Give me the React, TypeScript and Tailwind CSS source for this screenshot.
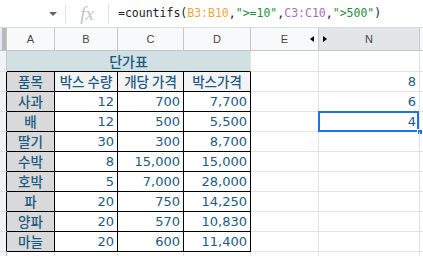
import React from "react";

// column widths of the visible sheet, including each cell's right border
const colW = ["w-[48px]", "w-[63px]", "w-[66px]", "w-[67px]", "w-[68px]", "w-[101px]", "w-[10px]"];
const colNames = ["A", "B", "C", "D", "E", "N", ""];

const items: [string, string, string, string][] = [
    ["사과", "12", "700", "7,700"],
    ["배", "12", "500", "5,500"],
    ["딸기", "30", "300", "8,700"],
    ["수박", "8", "15,000", "15,000"],
    ["호박", "5", "7,000", "28,000"],
    ["파", "20", "750", "14,250"],
    ["양파", "20", "570", "10,830"],
    ["마늘", "20", "600", "11,400"],
];

// values shown in column N, by table row index (0 = header row)
const nValues: { [k: number]: string } = { 0: "8", 1: "6", 2: "4" };

const cellFont = "font-['DejaVu_Sans','Noto_Sans_CJK_KR',sans-serif] text-[13px] leading-none text-[#1d5a82]";
const korFont = "font-['Noto_Sans_CJK_KR',sans-serif] font-medium text-[13.5px] leading-none text-[#1d5a82]";

const Strip = ({ black }: { black?: boolean }) => (
    <div
        className={`w-[7px] shrink-0 bg-[#f1f3f4] border-b border-b-[#e2e2e3] border-r ${
            black ? "border-r-black" : "border-r-[#c4c7c5]"
        }`}
    />
);

const FormulaBar = () => (
    <div className="flex h-[28px] items-center border-b border-[#dadce0] bg-white">
        <div className="w-[65px] flex justify-end pr-[8px]">
            <span className="block w-0 h-0 border-l-[4px] border-r-[4px] border-t-[4px] border-l-transparent border-r-transparent border-t-[#5f6368]" />
        </div>
        <div className="w-px h-[18px] bg-[#e0e0e0]" />
        <div className="w-[42px] flex justify-center font-['Liberation_Serif',serif] italic text-[19px] text-[#c4c4c4] leading-none">
            fx
        </div>
        <div className="w-px h-[18px] bg-[#e0e0e0]" />
        <div className="pl-[9px] font-['DejaVu_Sans_Mono',monospace] text-[11.5px] text-[#202124] whitespace-pre">
            =countifs(<span className="text-[#f4a43a]">B3:B10</span>,
            <span className="text-[#1e8e3e]">"&gt;=10"</span>,<span className="text-[#a56cc2]">C3:C10</span>,
            <span className="text-[#1e8e3e]">"&gt;500"</span>)
        </div>
    </div>
);

const ColumnHeader = () => (
    <div className="flex h-[23px] border-b border-[#c4c7c5] bg-[#f8f9fa]">
        <div className="w-[7px] shrink-0 flex border-r border-[#c4c7c5] bg-[#e8eaed]">
            <div className="w-[2px]" />
            <div className="w-[4px] bg-[#b7b9bc]" />
        </div>
        {colNames.map((name, i) => (
            <div
                key={i}
                className={`${colW[i]} shrink-0 relative flex items-center justify-center border-r border-[#c4c7c5] font-['Liberation_Sans',sans-serif] text-[11px] text-[#444746] ${
                    name === "N" ? "bg-[#e3e5e8]" : ""
                }`}
            >
                {name}
                {name === "E" && (
                    <span className="absolute right-[4px] top-[8px] w-0 h-0 border-t-[3px] border-b-[3px] border-r-[4px] border-t-transparent border-b-transparent border-r-black" />
                )}
                {name === "N" && (
                    <span className="absolute left-[4px] top-[8px] w-0 h-0 border-t-[3px] border-b-[3px] border-l-[4px] border-t-transparent border-b-transparent border-l-black" />
                )}
            </div>
        ))}
    </div>
);

const grid = "border-r border-b border-[#e2e2e3]";
const tbl = "border-r border-b border-black";

const TitleRow = () => (
    <div className="flex h-[21px]">
        <Strip />
        <div
            className={`w-[244px] shrink-0 flex items-center justify-center bg-[#d0e0e3] border-r border-r-[#e2e2e3] border-b border-b-black ${korFont} text-[14px]`}
        >
            단가표
        </div>
        <div className={`${colW[4]} shrink-0 ${grid}`} />
        <div className={`${colW[5]} shrink-0 ${grid}`} />
        <div className={`${colW[6]} shrink-0 ${grid}`} />
    </div>
);

const NCell = ({ index }: { index: number }) => {
    const selected = index === 2;
    return (
        <div className={`${colW[5]} shrink-0 relative flex items-center justify-end pr-[3px] ${grid} ${cellFont}`}>
            {nValues[index] ?? ""}
            {selected && (
                <>
                    <div className="absolute left-[-1px] top-[-1px] right-[0px] bottom-[-1px] border-2 border-[#1a73e8]" />
                    <div className="absolute right-[-4px] bottom-[-4px] w-[6px] h-[6px] bg-[#1a73e8] border border-white" />
                </>
            )}
        </div>
    );
};

const HeaderRow = () => (
    <div className="flex h-[20px]">
        <Strip black />
        <div className={`${colW[0]} shrink-0 flex items-center justify-center bg-[#d9d9d9] ${tbl} ${korFont}`}>품목</div>
        {["박스 수량", "개당 가격", "박스가격"].map((h, i) => (
            <div
                key={h}
                className={`${colW[i + 1]} shrink-0 flex items-center justify-center bg-[#f3f3f3] ${tbl} ${korFont}`}
            >
                {h}
            </div>
        ))}
        <div className={`${colW[4]} shrink-0 ${grid}`} />
        <NCell index={0} />
        <div className={`${colW[6]} shrink-0 ${grid}`} />
    </div>
);

const ItemRow = ({ row, index }: { row: [string, string, string, string]; index: number }) => (
    <div className="flex h-[20px]">
        <Strip black />
        <div className={`${colW[0]} shrink-0 flex items-center justify-center bg-[#d9d9d9] ${tbl} ${korFont}`}>
            {row[0]}
        </div>
        {row.slice(1).map((v, i) => (
            <div
                key={i}
                className={`${colW[i + 1]} shrink-0 flex items-center justify-end pr-[3px] bg-white ${tbl} ${cellFont}`}
            >
                {v}
            </div>
        ))}
        <div className={`${colW[4]} shrink-0 ${grid}`} />
        <NCell index={index} />
        <div className={`${colW[6]} shrink-0 ${grid}`} />
    </div>
);

const App = () => (
    <div className="w-[423px] h-[256px] overflow-hidden bg-white">
        <FormulaBar />
        <ColumnHeader />
        <TitleRow />
        <HeaderRow />
        {items.map((row, i) => (
            <ItemRow key={row[0]} row={row} index={i + 1} />
        ))}
        <div className="flex h-[20px]">
            <Strip />
            {colW.map((w, i) => (
                <div key={i} className={`${w} shrink-0 ${grid}`} />
            ))}
        </div>
    </div>
);

export default App;
